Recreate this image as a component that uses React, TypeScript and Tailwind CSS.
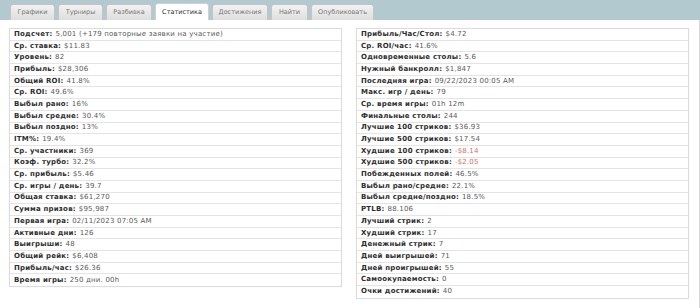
import React from "react"

type Row = { label: string; value: string; neg?: boolean }

const tabs: { name: string; w: string }[] = [
  { name: "Графики", w: "w-[45px]" },
  { name: "Турниры", w: "w-[45px]" },
  { name: "Разбивка", w: "w-[46px]" },
  { name: "Статистика", w: "w-[54px]" },
  { name: "Достижения", w: "w-[56px]" },
  { name: "Найти", w: "w-[37px]" },
  { name: "Опубликовать", w: "w-[63px]" },
]

const left: Row[] = [
  { label: "Подсчет", value: "5,001 (+179 повторные заявки на участие)" },
  { label: "Ср. ставка", value: "$11.83" },
  { label: "Уровень", value: "82" },
  { label: "Прибыль", value: "$28,306" },
  { label: "Общий ROI", value: "41.8%" },
  { label: "Ср. ROI", value: "49.6%" },
  { label: "Выбыл рано", value: "16%" },
  { label: "Выбыл средне", value: "30.4%" },
  { label: "Выбыл поздно", value: "13%" },
  { label: "ITM%", value: "19.4%" },
  { label: "Ср. участники", value: "369" },
  { label: "Коэф. турбо", value: "32.2%" },
  { label: "Ср. прибыль", value: "$5.46" },
  { label: "Ср. игры / день", value: "39.7" },
  { label: "Общая ставка", value: "$61,270" },
  { label: "Сумма призов", value: "$95,987" },
  { label: "Первая игра", value: "02/11/2023 07:05 AM" },
  { label: "Активные дни", value: "126" },
  { label: "Выигрыши", value: "48" },
  { label: "Общий рейк", value: "$6,408" },
  { label: "Прибыль/час", value: "$26.36" },
  { label: "Время игры", value: "250 дни. 00h" },
]

const right: Row[] = [
  { label: "Прибыль/Час/Стол", value: "$4.72" },
  { label: "Ср. ROI/час", value: "41.6%" },
  { label: "Одновременные столы", value: "5.6" },
  { label: "Нужный банкролл", value: "$1,847" },
  { label: "Последняя игра", value: "09/22/2023 00:05 AM" },
  { label: "Макс. игр / день", value: "79" },
  { label: "Ср. время игры", value: "01h 12m" },
  { label: "Финальные столы", value: "244" },
  { label: "Лучшие 100 стриков", value: "$36.93" },
  { label: "Лучшие 500 стриков", value: "$17.54" },
  { label: "Худшие 100 стриков", value: "-$8.14", neg: true },
  { label: "Худшие 500 стриков", value: "-$2.05", neg: true },
  { label: "Побежденных полей", value: "46.5%" },
  { label: "Выбыл рано/средне", value: "22.1%" },
  { label: "Выбыл средне/поздно", value: "18.5%" },
  { label: "PTLB", value: "88.106" },
  { label: "Лучший стрик", value: "2" },
  { label: "Худший стрик", value: "17" },
  { label: "Денежный стрик", value: "7" },
  { label: "Дней выигрышей", value: "71" },
  { label: "Дней проигрышей", value: "55" },
  { label: "Самоокупаемость", value: "0" },
  { label: "Очки достижений", value: "40" },
]

function StatList({ rows }: { rows: Row[] }) {
  return (
    <div className="flex-1 border border-[#dcdcdc] shadow-[0_0_1px_rgba(0,0,0,0.08)]">
      {rows.map((r, i) => (
        <div
          key={r.label}
          className={
            "h-[11.7px] flex items-center px-[4px] whitespace-nowrap " +
            (i < rows.length - 1 ? "border-b border-[#e4e4e4]" : "")
          }
        >
          <span className="font-bold text-[#2e2e2e]">{r.label}:</span>
          <span className={"ml-[3px] " + (r.neg ? "text-[#d47068]" : "text-[#5a5a5a]")}>{r.value}</span>
        </div>
      ))}
    </div>
  )
}

export default function App() {
  return (
    <div className="w-[700px] h-[308px] bg-white font-['DejaVu_Sans',Verdana,sans-serif] text-[7px] tracking-[0.2px] leading-none overflow-hidden">
      <div className="h-[20px] bg-[#b3c9d0] flex items-end pl-[10px] gap-[3px] text-[6.5px] tracking-normal">
        {tabs.map((t) =>
          t.name === "Статистика" ? (
            <div
              key={t.name}
              className={t.w + " h-[17px] flex items-center justify-center bg-white border border-b-0 border-[#c9d3d6] rounded-t-[3px] text-[#333]"}
            >
              {t.name}
            </div>
          ) : (
            <div
              key={t.name}
              className={t.w + " h-[16px] flex items-center justify-center bg-gradient-to-b from-[#f2f2f2] to-[#dedede] border border-b-0 border-[#c4c4c4] rounded-t-[3px] text-[#777]"}
            >
              {t.name}
            </div>
          )
        )}
      </div>
      <div className="h-[288px] border-r border-[#d8d8d8] w-[700px] pl-[9px] pr-[10px] pt-[8px] flex items-start gap-[14px]">
        <StatList rows={left} />
        <StatList rows={right} />
      </div>
    </div>
  )
}
